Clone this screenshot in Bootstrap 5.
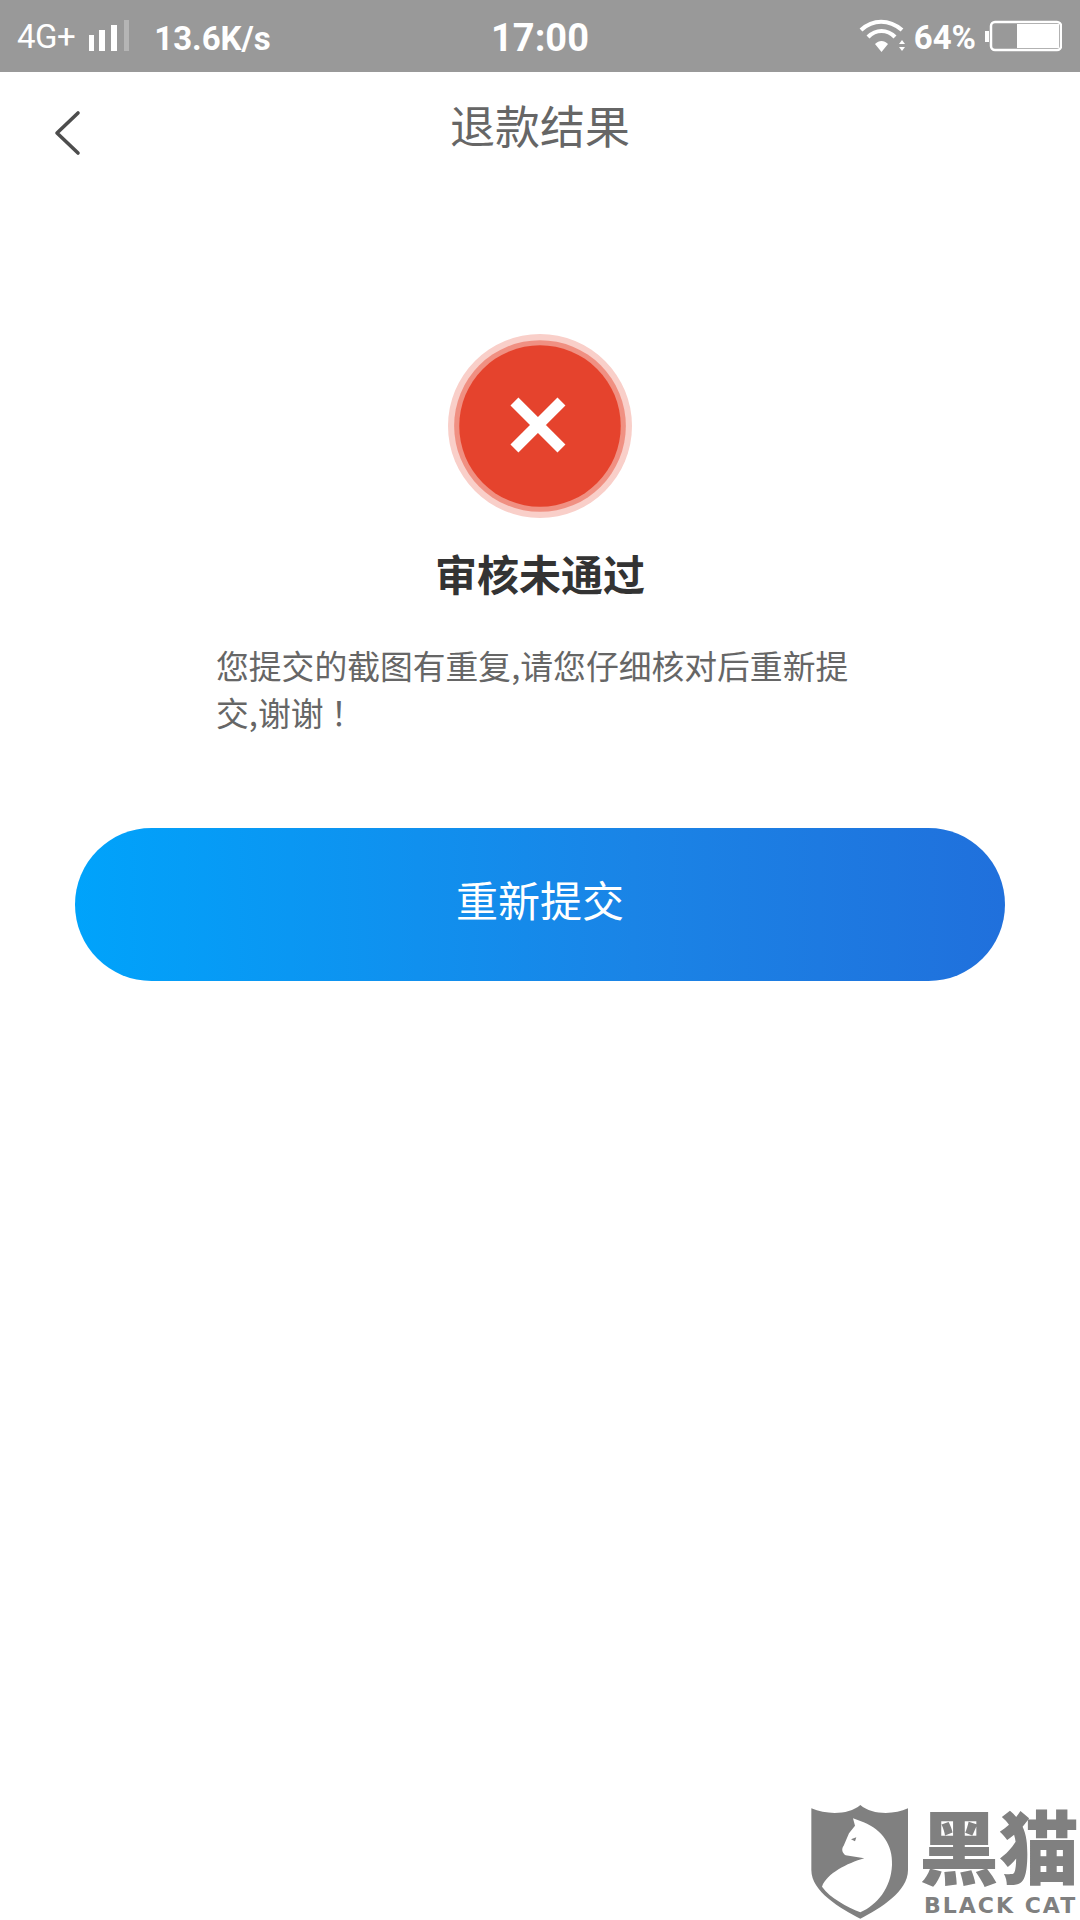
<!DOCTYPE html>
<html lang="zh">
<head>
<meta charset="utf-8">
<title>退款结果</title>
<link href="https://cdn.jsdelivr.net/npm/bootstrap@5.3.0/dist/css/bootstrap.min.css" rel="stylesheet">
<style>
html,body{height:1920px;margin:0;background:#fff;overflow:hidden}
.screen{position:relative;width:1080px;height:1920px;font-family:"Noto Sans CJK SC","Noto Sans",sans-serif}
.sbar{height:72px;background:#999;color:#fff;font-family:Roboto,"Liberation Sans",sans-serif;position:relative;padding:0 18px 0 17px}
.s-net{font-size:33px;letter-spacing:-.5px;line-height:1}
.s-bars{margin-left:13px}
.s-speed{font-size:33px;font-weight:700;line-height:1;margin-left:20px;padding-top:4px}
.s-time{position:absolute;left:0;right:0;top:2px;height:72px;font-size:38px;font-weight:700;line-height:1}
.s-pct{font-size:33px;font-weight:700;line-height:1;margin-left:7px;margin-right:8px;padding-top:2px}
.navhead{height:106px;position:relative;color:#666}
.navtitle{font-size:45px;line-height:1;font-weight:400;margin:30px 0 0}
.backlink{position:absolute;left:54px;top:38px;line-height:0}
.badge-wrap{margin-top:156px;line-height:0}
.badge-wrap svg{filter:blur(.7px)}
.resulthead{font-size:42px;line-height:1;font-weight:700;color:#333;margin:34px 0 0}
.resultmsg{width:646px;margin:48px 0 0 216px;font-size:32.8px;line-height:46.5px;color:#666}
.retry{display:flex;align-items:center;justify-content:center;width:930px;height:153px;margin:93px 0 0 75px;padding:0 0 12px;border:0;border-radius:77px;background:linear-gradient(90deg,#00a3fb 0%,#1a84e6 60%,#2070dc 100%);color:#fff;font-size:42px;line-height:1}
.retry:hover,.retry:active{color:#fff;background:linear-gradient(90deg,#00a3fb 0%,#1a84e6 60%,#2070dc 100%)}
.wm{position:absolute;right:1px;bottom:0;color:#808080;gap:10px}
.wm-cn{font-size:80px;line-height:74px;font-weight:900;white-space:nowrap;margin-top:2px}
.wm-en{font-family:"DejaVu Sans",sans-serif;font-size:22px;line-height:24px;font-weight:700;letter-spacing:2px;white-space:nowrap;margin:14px 0 0 5px}
</style>
</head>
<body>
<div class="screen">
  <div class="sbar d-flex align-items-center">
    <span class="s-net">4G+</span>
    <svg class="s-bars" width="46" height="32" viewBox="0 0 46 32" fill="#fff"><rect x="1" y="15" width="5" height="16"/><rect x="11" y="10" width="6" height="21"/><rect x="23" y="5" width="6" height="26"/><rect x="36" y="0" width="5" height="31" fill="#b5b5b5"/></svg>
    <span class="s-speed">13.6K/s</span>
    <div class="s-time d-flex align-items-center justify-content-center">17:00</div>
    <div class="ms-auto d-flex align-items-center">
      <svg width="48" height="34" viewBox="0 0 48 34" fill="none" stroke="#fff" stroke-width="4.2"><path d="M2 11C14 0 30 0 43 11"/><path d="M9 18C17 10 28 10 36 18"/><path d="M16 25 22.5 33 29 25C25 21 20 21 16 25Z" fill="#fff" stroke="none"/><path d="M40 25l3-4 3 4ZM40 28l3 4 3-4Z" fill="#fff" stroke="none"/></svg>
      <span class="s-pct">64%</span>
      <svg width="78" height="32" viewBox="0 0 78 32" fill="#fff"><path d="M1 11h4v11H1Z"/><rect x="7" y="2" width="70" height="28" rx="4" fill="none" stroke="#fff" stroke-width="2.5"/><rect x="33" y="4" width="42" height="24"/></svg>
    </div>
  </div>
  <div class="navhead d-flex justify-content-center">
    <a class="backlink" href="#" aria-label="返回"><svg width="28" height="46" viewBox="0 0 28 46" fill="none" stroke="#4d4d4d" stroke-width="3.6" stroke-linecap="round" stroke-linejoin="round"><path d="M24 3 3 23 24 43"/></svg></a>
    <h1 class="navtitle">退款结果</h1>
  </div>
  <div class="badge-wrap text-center">
    <svg width="184" height="184" viewBox="0 0 180 180"><circle cx="90" cy="90" r="90" fill="#f9cfc9"/><circle cx="90" cy="90" r="84" fill="#f09082"/><circle cx="90" cy="90" r="79" fill="#e5432d"/><path d="M65 66 111 112M111 66 65 112" stroke="#fff" stroke-width="11"/></svg>
  </div>
  <h2 class="resulthead text-center">审核未通过</h2>
  <p class="resultmsg">您提交的截图有重复,请您仔细核对后重新提交,谢谢 ！</p>
  <button type="button" class="btn retry">重新提交</button>
  <div class="wm d-flex align-items-start">
    <svg width="98" height="116" viewBox="93 72 292 348"><path d="M93 85C140 105 205 105 240 75 275 105 340 105 383 85V270C383 335 300 385 240 416 180 385 93 335 93 270Z" fill="#808080"/><path d="M218 115 250 127C305 150 338 195 335 255 332 325 290 375 240 397 200 380 150 355 125 320 140 280 200 250 252 235L196 226C186 218 182 208 190 197L206 160 224 137Z" fill="#fff"/><path d="M212 178 228 172 224 184Z" fill="#808080"/></svg>
    <div class="d-flex flex-column">
      <span class="wm-cn">黑猫</span>
      <span class="wm-en">BLACK CAT</span>
    </div>
  </div>
</div>
<script src="https://cdn.jsdelivr.net/npm/bootstrap@5.3.0/dist/js/bootstrap.bundle.min.js"></script>
</body>
</html>
